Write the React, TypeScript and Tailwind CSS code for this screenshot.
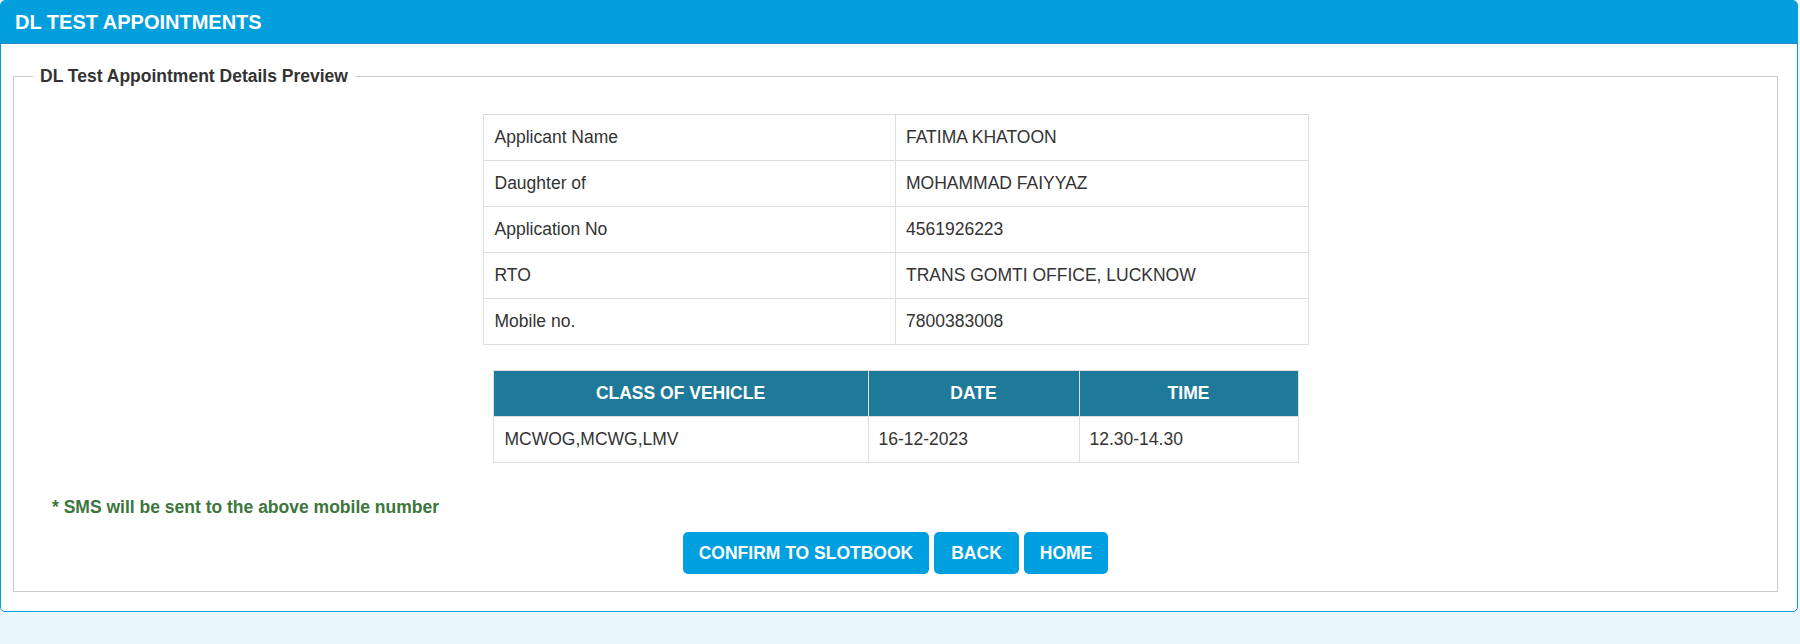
import React from "react";

const details = [
  { label: "Applicant Name", value: "FATIMA KHATOON" },
  { label: "Daughter of", value: "MOHAMMAD FAIYYAZ" },
  { label: "Application No", value: "4561926223" },
  { label: "RTO", value: "TRANS GOMTI OFFICE, LUCKNOW" },
  { label: "Mobile no.", value: "7800383008" },
];

export default function App() {
  return (
    <div className="min-h-screen bg-[#eaf7fd] font-['Liberation_Sans',Arial,sans-serif] text-[#333]">
      <div className="mr-[2px] bg-white border border-[#039fdd] rounded-[5px] overflow-hidden">
        {/* Header */}
        <div className="h-[43px] bg-[#039fdd] border-b border-[#2b86c4] px-[14px] flex items-center">
          <h1 className="text-white text-[20px] font-bold">DL TEST APPOINTMENTS</h1>
        </div>

        {/* Body */}
        <div className="pl-[12px] pr-[19px] pt-[22px] pb-[19px]">
          <fieldset className="border border-[#ccc] pb-[17px]">
            <legend className="ml-[19px] px-[7px] text-[17.5px] leading-[20px] font-bold text-[#333]">
              DL Test Appointment Details Preview
            </legend>

            <div className="pt-[28px]">
              <table className="w-[826px] mx-auto table-fixed border-collapse text-[17.5px]">
                <tbody>
                  {details.map((row) => (
                    <tr key={row.label} className="h-[46px]">
                      <td className="w-1/2 border border-[#ddd] px-[11px]">{row.label}</td>
                      <td className="w-1/2 border border-[#ddd] px-[10px]">{row.value}</td>
                    </tr>
                  ))}
                </tbody>
              </table>

              <table className="w-[806px] mx-auto mt-[25px] table-fixed border-collapse text-[17.5px]">
                <thead>
                  <tr className="h-[46px] bg-[#1f7a99] text-white">
                    <th className="w-[375px] border border-[#ddd] font-bold">CLASS OF VEHICLE</th>
                    <th className="w-[211px] border border-[#ddd] font-bold">DATE</th>
                    <th className="border border-[#ddd] font-bold">TIME</th>
                  </tr>
                </thead>
                <tbody>
                  <tr className="h-[46px]">
                    <td className="border border-[#ddd] px-[11px]">MCWOG,MCWG,LMV</td>
                    <td className="border border-[#ddd] px-[10px]">16-12-2023</td>
                    <td className="border border-[#ddd] px-[10px]">12.30-14.30</td>
                  </tr>
                </tbody>
              </table>
            </div>

            <p className="mt-[32px] px-[38px] text-[17.5px] leading-[25px] font-bold text-[#3c763d]">
              * SMS will be sent to the above mobile number
            </p>

            <div className="mt-[12px] flex justify-center gap-[5px]">
              <button className="h-[42px] px-[16px] rounded-[5px] bg-[#009fdf] text-white text-[17.5px] font-bold">
                CONFIRM TO SLOTBOOK
              </button>
              <button className="h-[42px] px-[17px] rounded-[5px] bg-[#009fdf] text-white text-[17.5px] font-bold">
                BACK
              </button>
              <button className="h-[42px] px-[16px] rounded-[5px] bg-[#009fdf] text-white text-[17.5px] font-bold">
                HOME
              </button>
            </div>
          </fieldset>
        </div>
      </div>
    </div>
  );
}
